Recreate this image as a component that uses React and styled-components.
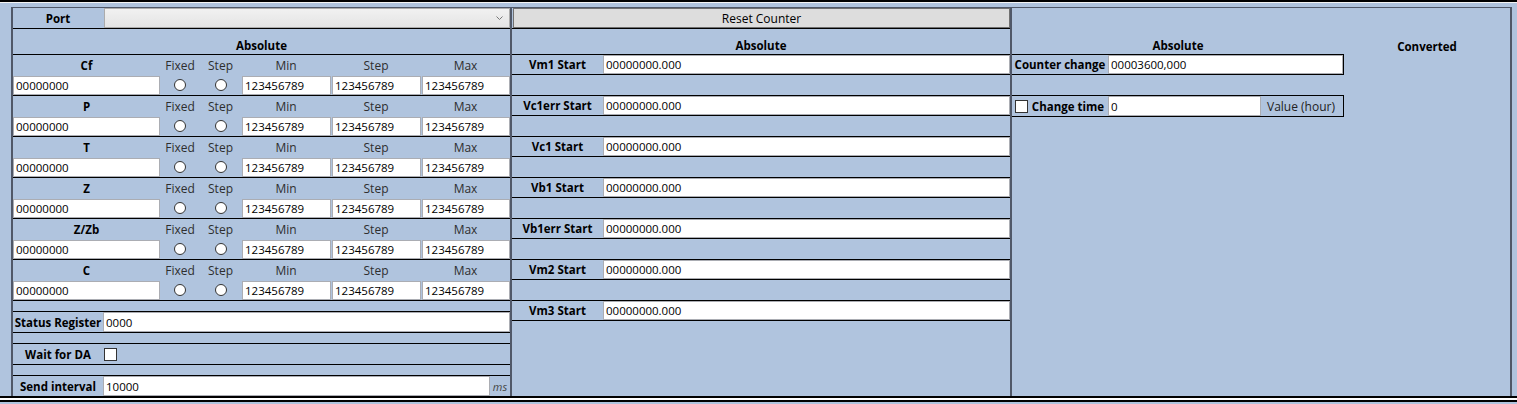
import React from "react";
import styled, { createGlobalStyle } from "styled-components";

const GlobalStyle = createGlobalStyle`
  *, *::before, *::after {
    box-sizing: border-box;
  }
  html, body {
    margin: 0;
    padding: 0;
    background: #b0c4de;
  }
  body {
    font-family: "Open Sans", "Noto Sans", sans-serif;
    font-size: 12px;
    color: #000;
  }
`;

const params = ["Cf", "P", "T", "Z", "Z/Zb", "C"];
const starts = ["Vm1", "Vc1err", "Vc1", "Vb1", "Vb1err", "Vm2", "Vm3"];

const Page = styled.div`
  width: 1517px;
  height: 404px;
  overflow: hidden;
  display: flex;
  flex-direction: column;
  background: #b0c4de;
`;

const TopRule = styled.div`
  flex: none;
  height: 3px;
  background: #000;
  border-bottom: 1px solid #f4f4f4;
`;

const BottomRule = styled.div`
  flex: none;
  height: 6px;
  background: #fff;
  border-top: 2px solid #000;
  border-bottom: 2px solid #000;
`;

const Frame = styled.div`
  flex: none;
  height: 389px;
  margin: 4px 5px 0 11px;
  border: 2px solid #505868;
  border-top: 1px solid #505868;
  border-bottom: none;
  display: flex;
`;

const Column = styled.div`
  width: ${(p) => p.$width}px;
  flex: none;
  display: flex;
  flex-direction: column;
  border-right: ${(p) => (p.$last ? "none" : "2px solid #505868")};
`;

const Row = styled.div`
  flex: none;
  height: ${(p) => p.$h}px;
  border-bottom: ${(p) => (p.$noLine ? "none" : "1px solid #000")};
  border-right: ${(p) => (p.$boxed ? "1px solid #000" : "none")};
  display: flex;
  align-items: stretch;
`;

const SectionHead = styled.div`
  flex: none;
  height: ${(p) => p.$h}px;
  border-bottom: ${(p) => (p.$noLine ? "none" : "1px solid #000")};
  display: flex;
  align-items: flex-end;
  justify-content: center;
  font-weight: 700;
  font-size: 11.5px;
  line-height: 15px;
  padding-bottom: 1px;
`;

const Label = styled.div`
  flex: none;
  width: ${(p) => p.$w}px;
  display: flex;
  align-items: center;
  justify-content: center;
  font-weight: ${(p) => (p.$plain ? 400 : 700)};
  font-size: ${(p) => (p.$plain ? 12 : 11.5)}px;
  color: ${(p) => (p.$plain ? "#222" : "#000")};
  white-space: nowrap;
`;

const Field = styled.input`
  flex: ${(p) => (p.$w ? "none" : "1")};
  width: ${(p) => (p.$w ? `${p.$w}px` : "auto")};
  min-width: 0;
  height: ${(p) => p.$h || 20}px;
  align-self: flex-end;
  margin: 0;
  padding: 0 2px;
  border: 1px solid #abadb3;
  background: #fff;
  font: inherit;
  font-size: 11.5px;
  color: #000;
  outline: none;
`;

const Combo = styled.div`
  flex: 1;
  margin-left: 1px;
  border: 1px solid #acacac;
  background: linear-gradient(#f1f1f1, #e4e4e4);
  display: flex;
  align-items: center;
  justify-content: flex-end;
  padding-right: 6px;
`;

const ResetButton = styled.button`
  flex: 1;
  margin: 0 0 0 1px;
  border: 1px solid #707070;
  background: #dddddd;
  font: inherit;
  color: #000;
  padding: 0;
`;

const ParamGroup = styled.div`
  flex: none;
  display: grid;
  grid-template-columns: 147px 40px 41px 90px 90px 89px;
  grid-template-rows: 20px 20px;
  border-bottom: 1px solid #000;
`;

const GridText = styled.div`
  display: flex;
  align-items: center;
  justify-content: center;
  font-weight: ${(p) => (p.$bold ? 700 : 400)};
  font-size: ${(p) => (p.$bold ? 11.5 : 12)}px;
  color: ${(p) => (p.$bold ? "#000" : "#2e2e2e")};
`;

const GridField = styled.input`
  align-self: end;
  height: 19px;
  width: ${(p) => (p.$inset ? "calc(100% - 1px)" : "100%")};
  margin: 0 0 0 ${(p) => (p.$inset ? 1 : 0)}px;
  padding: 0 2px;
  border: 1px solid #abadb3;
  background: #fff;
  font: inherit;
  font-size: 11.5px;
  color: #000;
  outline: none;
`;

const RadioCell = styled.div`
  display: flex;
  align-items: center;
  justify-content: center;
`;

const Radio = styled.span`
  width: 12px;
  height: 12px;
  border-radius: 50%;
  border: 1px solid #333;
  background: #fff;
`;

const CheckBox = styled.span`
  flex: none;
  width: 13px;
  height: 13px;
  border: 1px solid #333;
  background: #fff;
  align-self: center;
  margin-left: ${(p) => p.$ml || 0}px;
`;

const Spacer = styled.div`
  flex: none;
  height: ${(p) => p.$h}px;
  border-bottom: 1px solid #000;
`;

const Unit = styled.div`
  flex: 1;
  display: flex;
  align-items: center;
  justify-content: center;
  font-style: italic;
  color: #444;
  font-size: 11px;
`;

const SubColumns = styled.div`
  display: flex;
  flex: 1;
`;

const SubColumn = styled.div`
  display: flex;
  flex-direction: column;
  width: ${(p) => (p.$w ? `${p.$w}px` : "auto")};
  flex: ${(p) => (p.$w ? "none" : "1")};
`;

const Chevron = () => (
  <svg width="7" height="4" viewBox="0 0 7 4">
    <polyline points="0.5,0.5 3.5,3.5 6.5,0.5" fill="none" stroke="#777" strokeWidth="1" />
  </svg>
);

const ParamBlock = ({ name }) => (
  <ParamGroup>
    <GridText $bold>{name}</GridText>
    <GridText>Fixed</GridText>
    <GridText>Step</GridText>
    <GridText>Min</GridText>
    <GridText>Step</GridText>
    <GridText>Max</GridText>
    <GridField defaultValue="00000000" readOnly />
    <RadioCell>
      <Radio />
    </RadioCell>
    <RadioCell>
      <Radio />
    </RadioCell>
    <GridField $inset defaultValue="123456789" readOnly />
    <GridField $inset defaultValue="123456789" readOnly />
    <GridField $inset defaultValue="123456789" readOnly />
  </ParamGroup>
);

export default function App() {
  return (
    <Page>
      <GlobalStyle />
      <TopRule />
      <Frame>
        <Column $width={499}>
          <Row $h={21}>
            <Label $w={90}>Port</Label>
            <Combo>
              <Chevron />
            </Combo>
          </Row>
          <SectionHead $h={26}>Absolute</SectionHead>
          {params.map((p) => (
            <ParamBlock key={p} name={p} />
          ))}
          <Spacer $h={11} />
          <Row $h={21}>
            <Label $w={90}>Status Register</Label>
            <Field defaultValue="0000" readOnly />
          </Row>
          <Spacer $h={11} />
          <Row $h={21}>
            <Label $w={90}>Wait for DA</Label>
            <CheckBox $ml={1} />
          </Row>
          <Spacer $h={11} />
          <Row $h={20} $noLine>
            <Label $w={90}>Send interval</Label>
            <Field $w={387} defaultValue="10000" readOnly />
            <Unit>ms</Unit>
          </Row>
        </Column>

        <Column $width={500}>
          <Row $h={21}>
            <ResetButton>Reset Counter</ResetButton>
          </Row>
          <SectionHead $h={26}>Absolute</SectionHead>
          {starts.map((s, i) => (
            <React.Fragment key={s}>
              <Row $h={20}>
                <Label $w={91}>{s} Start</Label>
                <Field $h={19} defaultValue="00000000.000" readOnly />
              </Row>
              {i < starts.length - 1 && <Spacer $h={21} />}
            </React.Fragment>
          ))}
        </Column>

        <Column $width={498} $last>
          <SubColumns>
            <SubColumn $w={332}>
              <SectionHead $h={47}>Absolute</SectionHead>
              <Row $h={20} $boxed>
                <Label $w={96}>Counter change</Label>
                <Field $h={19} defaultValue="00003600,000" readOnly />
              </Row>
              <Spacer $h={21} />
              <Row $h={21} $boxed>
                <CheckBox $ml={3} />
                <Label $w={80}>Change time</Label>
                <Field $w={153} defaultValue="0" readOnly />
                <Label $w={80} $plain>
                  Value (hour)
                </Label>
              </Row>
            </SubColumn>
            <SubColumn>
              <SectionHead $h={47} $noLine>
                Converted
              </SectionHead>
            </SubColumn>
          </SubColumns>
        </Column>
      </Frame>
      <BottomRule />
    </Page>
  );
}
